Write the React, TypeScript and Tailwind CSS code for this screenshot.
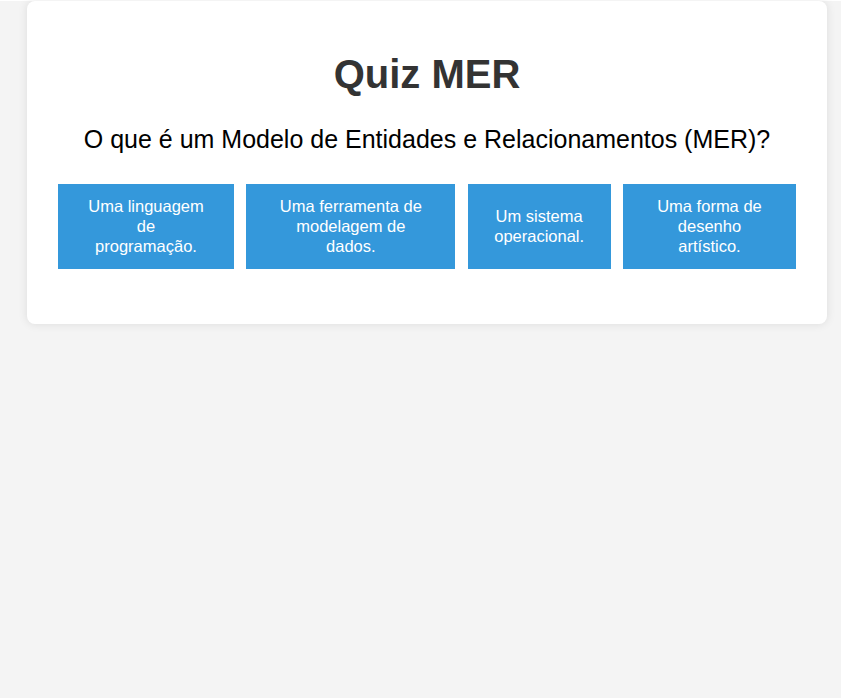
const options = [
  { text: "Uma linguagem de programação.", w: "w-[176px]", tw: "max-w-[120px]" },
  { text: "Uma ferramenta de modelagem de dados.", w: "w-[209px]", tw: "max-w-[152px]" },
  { text: "Um sistema operacional.", w: "w-[143px]", tw: "max-w-[104px]" },
  { text: "Uma forma de desenho artístico.", w: "w-[173px]", tw: "max-w-[120px]" },
];

export default function App() {
  return (
    <div className="min-h-screen bg-[#f4f4f4] font-['Liberation_Sans',Arial,sans-serif]">
      <div className="ml-[27px] mt-[1px] w-[800px] rounded-lg bg-white px-[31px] pt-[50px] pb-[55px] shadow-[0_0_10px_rgba(0,0,0,0.1)]">
        <h1 className="text-center text-[40px] leading-[46px] font-bold text-[#333]">Quiz MER</h1>
        <p className="mt-[28px] text-center text-[25px] leading-[28px] text-black">
          O que é um Modelo de Entidades e Relacionamentos (MER)?
        </p>
        <div className="mt-[31px] flex justify-between">
          {options.map((o) => (
            <button
              key={o.text}
              className={`${o.w} flex h-[85px] items-center justify-center bg-[#3498db] pb-[2px] text-[16.5px] leading-[20px] text-white`}
            >
              <span className={`${o.tw} text-center`}>{o.text}</span>
            </button>
          ))}
        </div>
      </div>
    </div>
  );
}
